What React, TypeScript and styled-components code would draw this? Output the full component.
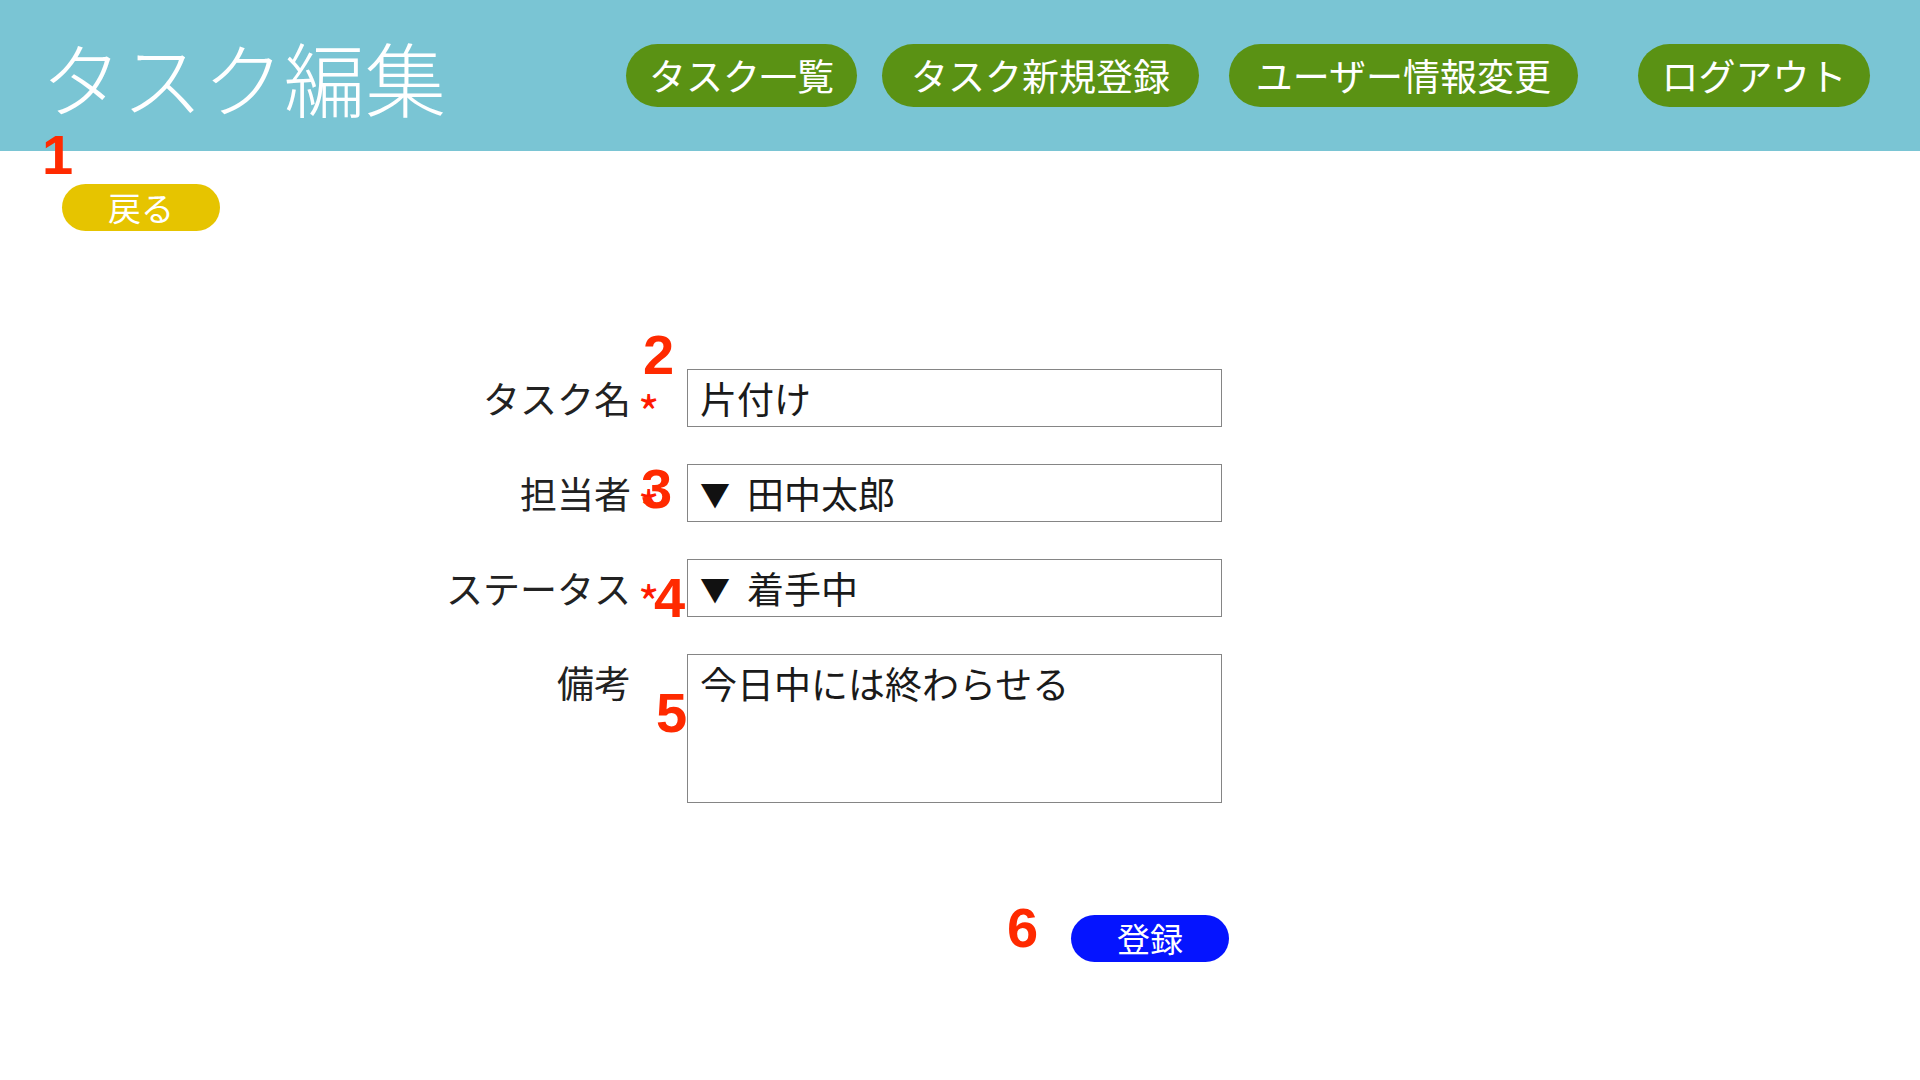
import React from "react";
import styled, { createGlobalStyle } from "styled-components";

const GlobalStyle = createGlobalStyle`
  html, body { margin: 0; padding: 0; background: #ffffff; }
  body { font-family: "Noto Sans CJK JP", "Noto Sans", sans-serif; }
  * { box-sizing: border-box; }
`;

const Page = styled.div`
  position: relative;
  width: 1920px;
  min-height: 1080px;
  background: #ffffff;
`;

const Header = styled.header`
  height: 151px;
  background: #7ac5d4;
  display: flex;
  align-items: center;
`;

const Title = styled.h1`
  margin: 0 0 0 41px;
  font-size: 81px;
  font-weight: 300;
  color: #ffffff;
  line-height: 1;
  letter-spacing: 0;
`;

const Nav = styled.nav`
  margin-left: auto;
  margin-right: 50px;
  display: flex;
  align-items: center;
`;

const NavButton = styled.button<{ $w: number; $ml: number }>`
  width: ${(p) => p.$w}px;
  height: 63px;
  margin-left: ${(p) => p.$ml}px;
  border: none;
  border-radius: 32px;
  background: #5a9214;
  color: #ffffff;
  font-family: inherit;
  font-size: 37px;
  line-height: 1;
  padding: 0;
  display: flex;
  align-items: center;
  justify-content: center;
  cursor: pointer;
`;

const BackButton = styled.button`
  margin: 33px 0 0 62px;
  width: 158px;
  height: 47px;
  border: none;
  border-radius: 24px;
  background: #e6c400;
  color: #ffffff;
  font-family: inherit;
  font-size: 33px;
  line-height: 1;
  padding: 0;
  display: flex;
  align-items: center;
  justify-content: center;
`;

const Form = styled.form`
  margin-top: 138px;
  display: grid;
  grid-template-columns: 631px 56px 535px;
  row-gap: 37px;
  align-items: center;
`;

const Label = styled.div<{ $top?: boolean }>`
  font-size: 37px;
  line-height: 1.2;
  color: #222222;
  text-align: right;
  align-self: ${(p) => (p.$top ? "start" : "center")};
  padding-top: ${(p) => (p.$top ? "6px" : "0")};
`;

const Required = styled.span`
  color: #ff1a00;
  font-size: 46px;
  padding-left: 7px;
  align-self: center;
  line-height: 30px;
  height: 30px;
  margin-top: 25px;
`;

const Field = styled.div<{ $tall?: boolean }>`
  height: ${(p) => (p.$tall ? "149px" : "58px")};
  border: 1.5px solid #858585;
  background: #ffffff;
  padding: ${(p) => (p.$tall ? "6px 12px" : "0 12px")};
  display: flex;
  align-items: ${(p) => (p.$tall ? "flex-start" : "center")};
  font-size: 37px;
  line-height: 1.2;
  color: #1a1a1a;
  white-space: pre;
`;

const Caret = styled.span`
  font-size: 30px;
  margin-right: 17px;
  color: #111111;
`;

const SubmitButton = styled.button`
  grid-column: 3;
  justify-self: end;
  margin-top: 75px;
  margin-right: -7px;
  width: 158px;
  height: 47px;
  border: none;
  border-radius: 24px;
  background: #0514ff;
  color: #ffffff;
  font-family: inherit;
  font-size: 33px;
  line-height: 1;
  padding: 0;
  display: flex;
  align-items: center;
  justify-content: center;
`;

const Marker = styled.span<{ $x: number; $y: number }>`
  position: absolute;
  left: ${(p) => p.$x}px;
  top: ${(p) => p.$y}px;
  font-family: "Liberation Sans", Arial, sans-serif;
  font-weight: 700;
  font-size: 56px;
  line-height: 1;
  color: #ff2a00;
  pointer-events: none;
`;

const navItems = [
  { label: "タスク一覧", w: 231, ml: 0 },
  { label: "タスク新規登録", w: 317, ml: 25 },
  { label: "ユーザー情報変更", w: 349, ml: 30 },
  { label: "ログアウト", w: 232, ml: 60 },
];

const markers = [
  { n: "1", x: 42, y: 127 },
  { n: "2", x: 643, y: 327 },
  { n: "3", x: 641, y: 461 },
  { n: "4", x: 654, y: 570 },
  { n: "5", x: 656, y: 685 },
  { n: "6", x: 1007, y: 900 },
];

export default function App() {
  return (
    <>
      <GlobalStyle />
      <Page>
        <Header>
          <Title>タスク編集</Title>
          <Nav>
            {navItems.map((item) => (
              <NavButton key={item.label} type="button" $w={item.w} $ml={item.ml}>
                {item.label}
              </NavButton>
            ))}
          </Nav>
        </Header>
        <BackButton type="button">戻る</BackButton>
        <Form onSubmit={(e) => e.preventDefault()}>
          <Label>タスク名</Label>
          <Required>*</Required>
          <Field>片付け</Field>

          <Label>担当者</Label>
          <Required>*</Required>
          <Field>
            <Caret>▼</Caret>田中太郎
          </Field>

          <Label>ステータス</Label>
          <Required>*</Required>
          <Field>
            <Caret>▼</Caret>着手中
          </Field>

          <Label $top>備考</Label>
          <span />
          <Field $tall>今日中には終わらせる</Field>

          <SubmitButton type="submit">登録</SubmitButton>
        </Form>
        {markers.map((m) => (
          <Marker key={m.n} $x={m.x} $y={m.y}>
            {m.n}
          </Marker>
        ))}
      </Page>
    </>
  );
}
